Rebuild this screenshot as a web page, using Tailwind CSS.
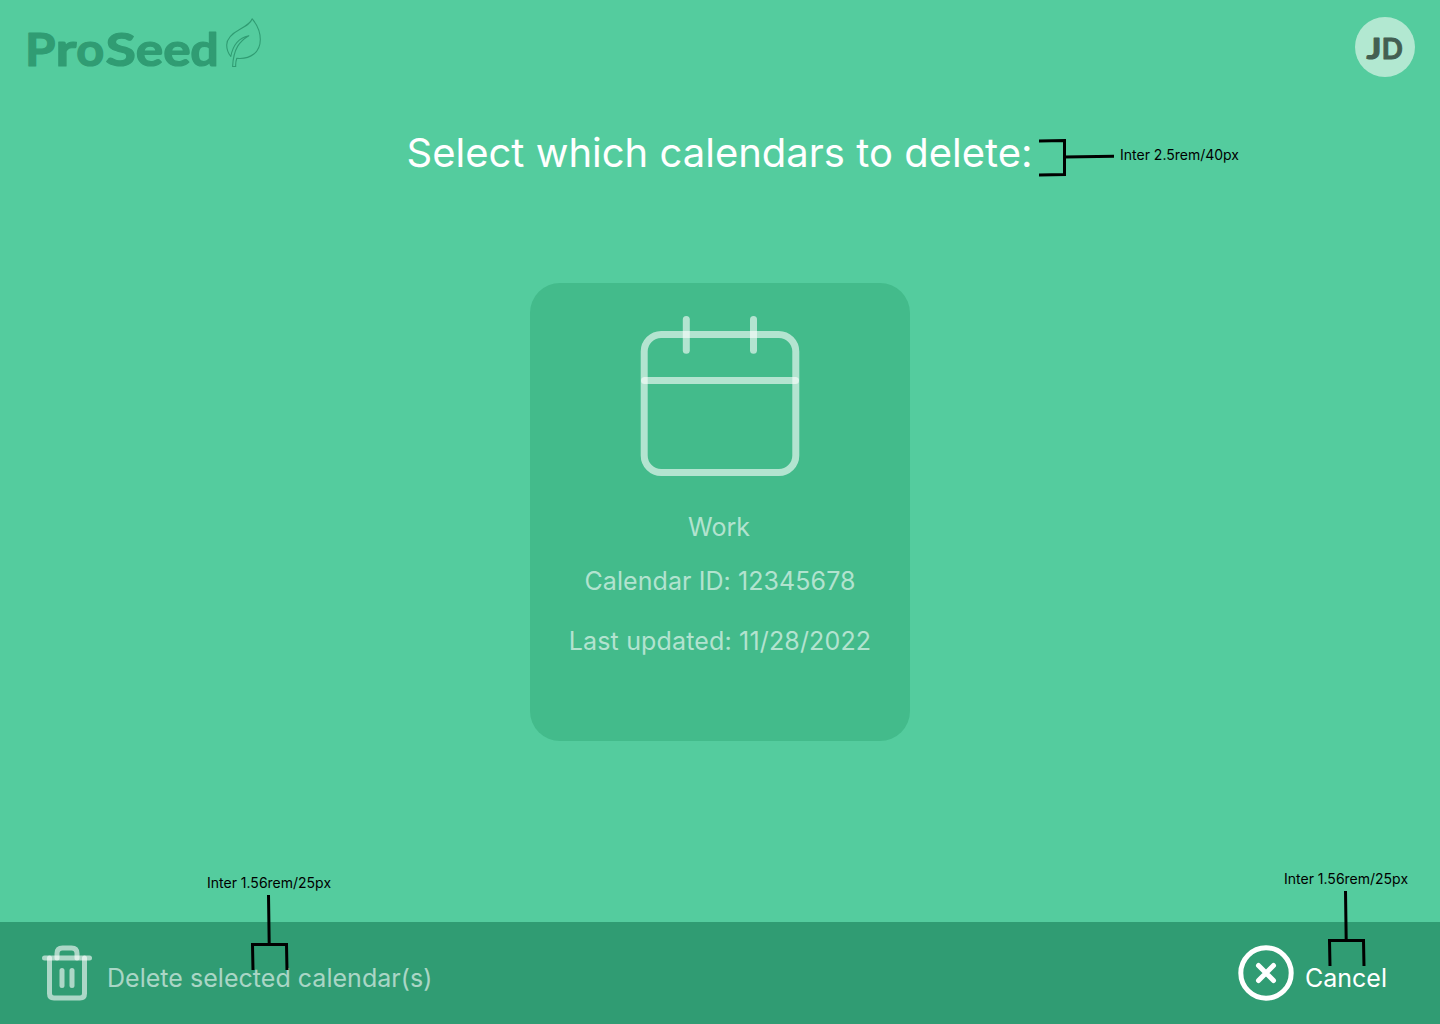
<!DOCTYPE html>
<html lang="en">
<head>
<meta charset="utf-8">
<title>ProSeed</title>
<script src="https://cdn.jsdelivr.net/npm/@tailwindcss/browser@4"></script>
</head>
<body class="relative flex h-[1024px] w-[1440px] flex-col overflow-hidden bg-[#54cc9e] font-['Inter',sans-serif] font-normal text-white">
  <header class="flex h-[94px] shrink-0 items-center justify-between pr-[25px] pl-5">
    <div class="flex items-center" aria-label="ProSeed">
      <svg class="h-[74px] w-[204px] overflow-visible" viewBox="20 10 204 74" fill="#309c73">
        <text y="66" font-family="Lato, sans-serif" font-weight="700" font-size="46.500" stroke="#309c73" stroke-width="1.200" stroke-linejoin="round"><tspan x="25" textLength="30.500" lengthAdjust="spacingAndGlyphs">P</tspan><tspan x="55.500" textLength="21" lengthAdjust="spacingAndGlyphs">r</tspan><tspan x="76.300" textLength="28" lengthAdjust="spacingAndGlyphs">o</tspan><tspan x="105.500" textLength="30.500" lengthAdjust="spacingAndGlyphs">S</tspan><tspan x="135.800" textLength="27.500" lengthAdjust="spacingAndGlyphs">e</tspan><tspan x="163.300" textLength="27.500" lengthAdjust="spacingAndGlyphs">e</tspan><tspan x="190.300" textLength="28.500" lengthAdjust="spacingAndGlyphs">d</tspan></text>
      </svg>
      <svg class="h-[74px] w-10" viewBox="224 10 40 74" fill="none" stroke="#309c73" stroke-width="1.1" stroke-linejoin="round">
        <path d="M252.2 18.8C250.5 23.5 246 26 240 29.2C232 33.5 226.7 38 226.7 45C226.7 49.5 228 53 230.8 56.5C232.500 47 238 38 248.800 35.700C240 41 233.500 48 232.600 66.500H235.700C235.500 63 236 60.500 236.800 58.300C251 59.500 260.300 52 260.300 39.500C260.300 31 256.500 24 252.200 18.800Z"/>
      </svg>
    </div>
    <div class="flex size-[60px] items-center justify-center rounded-full bg-[#b2e8d1]">
      <svg class="size-[60px]" viewBox="1355 17 60 60" fill="#435f52">
        <text y="59" font-family="Lato, sans-serif" font-weight="700" font-size="29" stroke="#435f52" stroke-width="1" stroke-linejoin="round"><tspan x="1366.500" textLength="15" lengthAdjust="spacingAndGlyphs">J</tspan><tspan x="1381.700" textLength="21" lengthAdjust="spacingAndGlyphs">D</tspan></text>
      </svg>
    </div>
  </header>

  <main class="flex grow flex-col items-center">
    <h1 class="mt-[35px] mr-px text-[40px] leading-[48px] whitespace-nowrap">Select which calendars to delete:</h1>
    <section class="mt-[106px] flex h-[458px] w-[380px] flex-col items-center rounded-[30px] bg-[#43bb8b] pt-[31px] text-[25px] leading-[30px] text-white/60">
      <svg class="h-[165px] w-[164px]" viewBox="638 314 164 165" fill="none" stroke="#fff" stroke-opacity=".6" stroke-width="7" stroke-linecap="round">
        <rect x="644.200" y="334.500" width="151.600" height="138" rx="17"/>
        <path d="M686.300 319.500V350.200"/>
        <path d="M753.500 319.500V350.200"/>
        <path d="M644.500 380.500H795.500"/>
      </svg>
      <p class="mt-[33px] mr-0.5">Work</p>
      <p class="mt-6 tracking-[0.08px]">Calendar ID: 12345678</p>
      <p class="mt-[30px] tracking-[0.16px]">Last updated: 11/28/2022</p>
    </section>
  </main>

  <footer class="flex h-[102px] shrink-0 items-center justify-between bg-[#309c73] pr-[53px] pl-10 text-[25px] leading-[30px]">
    <button class="flex items-center text-white/60">
      <svg class="h-[60px] w-[54px]" viewBox="40 943 54 60" fill="none" stroke="#fff" stroke-opacity=".6" stroke-width="5" stroke-linecap="round" stroke-linejoin="round">
        <path d="M49.500 958V993.500Q49.500 998 54 998H80Q84.500 998 84.500 993.500V958"/>
        <path d="M44.500 958H89.500"/>
        <path d="M57 958V953.500Q57 948 62.500 948H71.500Q77 948 77 953.500V958"/>
        <path d="M62 970.500V985.500"/>
        <path d="M72 970.500V985.500"/>
      </svg>
      <span class="mt-[10px] ml-[13px] tracking-[0.03px]">Delete selected calendar(s)</span>
    </button>
    <button class="flex items-center">
      <svg class="size-[60px]" viewBox="1236 943 60 60" fill="none" stroke="#fff" stroke-width="5" stroke-linecap="round">
        <circle cx="1266" cy="973" r="25.200"/>
        <path d="M1258.500 965.500L1273.500 980.500M1273.500 965.500L1258.500 980.500"/>
      </svg>
      <span class="mt-[10px] ml-[9px] w-[82px] text-left">Cancel</span>
    </button>
  </footer>

  <!-- Type size callouts laid over the page -->
  <div class="absolute top-[136px] left-[1039px] flex items-center text-sm leading-[17px] text-black">
    <svg class="h-11 w-[81px]" viewBox="1039 136 81 44" fill="none" stroke="#000" stroke-width="3">
      <path d="M1039 141L1064.500 140.500V174.500L1039 175M1064.500 157L1114 156.300"/>
    </svg>
    <span class="-mt-[7px]">Inter 2.5rem/40px</span>
  </div>
  <div class="absolute top-[874px] left-[207px] flex flex-col text-sm leading-[17px] text-black">
    <span>Inter 1.56rem/25px</span>
    <svg class="mt-1 ml-11 h-[75px] w-[38px]" viewBox="251 895 38 75" fill="none" stroke="#000" stroke-width="3">
      <path d="M268.500 895L269.200 944M253 970L252.500 944.500H286.500L287 970"/>
    </svg>
  </div>
  <div class="absolute top-[870px] left-[1284px] flex flex-col text-sm leading-[17px] text-black">
    <span>Inter 1.56rem/25px</span>
    <svg class="mt-1 ml-11 h-[75px] w-[38px]" viewBox="251 895 38 75" fill="none" stroke="#000" stroke-width="3">
      <path d="M268.500 895L269.200 944M253 970L252.500 944.500H286.500L287 970"/>
    </svg>
  </div>
</body>
</html>
